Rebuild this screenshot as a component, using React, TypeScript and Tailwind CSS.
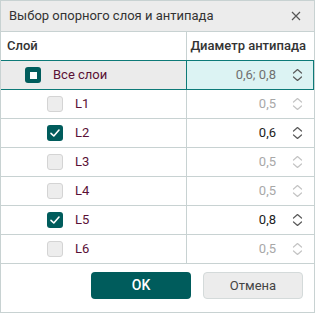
import React from "react";

const font = { fontFamily: "Roboto, 'Noto Sans', sans-serif" };

function Chevrons({ active }: { active: boolean }) {
  return (
    <svg width="11" height="14" viewBox="0 0 11 14" className="shrink-0">
      <path
        d="M1.5 5 L5.5 1.5 L9.5 5 M1.5 9 L5.5 12.5 L9.5 9"
        fill="none"
        stroke={active ? "#5a5a5a" : "#c4c4c4"}
        strokeWidth="1.2"
        strokeLinecap="round"
        strokeLinejoin="round"
      />
    </svg>
  );
}

function Check({ checked }: { checked: boolean }) {
  if (checked)
    return (
      <div className="w-[16px] h-[16px] rounded-[3px] bg-[#005c5c] flex items-center justify-center">
        <svg width="12" height="12" viewBox="0 0 12 12">
          <path d="M2 6.3 L4.8 9 L10 3" fill="none" stroke="white" strokeWidth="1.6" strokeLinecap="round" strokeLinejoin="round" />
        </svg>
      </div>
    );
  return <div className="w-[16px] h-[16px] rounded-[3px] bg-[#ededed] border border-[#d4d4d4]" />;
}

const rows = [
  { name: "L1", checked: false, value: "0,5" },
  { name: "L2", checked: true, value: "0,6" },
  { name: "L3", checked: false, value: "0,5" },
  { name: "L4", checked: false, value: "0,5" },
  { name: "L5", checked: true, value: "0,8" },
  { name: "L6", checked: false, value: "0,5" },
];

export default function App() {
  return (
    <div style={font} className="w-[315px] h-[313px] border border-[#c8d2d2] bg-white flex flex-col text-[13px] whitespace-nowrap">
      <div className="h-[31px] bg-[#ececec] flex items-center justify-between pl-[8px] pr-[13px] border-b border-[#c8d2d2] shrink-0">
        <span className="text-[#333] text-[13px]">Выбор опорного слоя и антипада</span>
        <svg width="10" height="10" viewBox="0 0 10 10">
          <path d="M1 1 L9 9 M9 1 L1 9" stroke="#555" strokeWidth="1.2" />
        </svg>
      </div>
      <div className="h-[28px] flex shrink-0">
        <div className="w-[185px] flex items-center pl-[6px] font-medium text-[#333]">Слой</div>
        <div className="flex-1 border-l border-[#c8d2d2] flex items-center justify-end pr-[8px] font-medium text-[#333]">
          Диаметр антипада
        </div>
      </div>
      <div className="h-[30px] flex border-y border-[#0d7a78] shrink-0">
        <div className="w-[185px] bg-[#ebebeb] flex items-center pl-[24px] gap-[12px]">
          <div className="w-[16px] h-[16px] rounded-[3px] bg-[#005c5c] flex items-center justify-center">
            <div className="w-[7px] h-[7px] bg-white" />
          </div>
          <span className="text-[#5a1035]">Все слои</span>
        </div>
        <div className="flex-1 bg-[#dcf3f3] border-x border-[#0d7a78] flex items-center justify-end pr-[10px] gap-[16px]">
          <span className="text-[#707070]">0,6; 0,8</span>
          <Chevrons active={true} />
        </div>
      </div>
      {rows.map((r) => (
        <div key={r.name} className="h-[29px] flex border-b border-[#c8d2d2] shrink-0">
          <div className="w-[185px] flex items-center pl-[46px] gap-[12px]">
            <Check checked={r.checked} />
            <span className="text-[#5a1035]">{r.name}</span>
          </div>
          <div className="flex-1 border-l border-[#c8d2d2] flex items-center justify-end pr-[11px] gap-[16px]">
            <span className={r.checked ? "text-[#222]" : "text-[#a8a8a8]"}>{r.value}</span>
            <Chevrons active={r.checked} />
          </div>
        </div>
      ))}
      <div className="flex-1 flex justify-end items-start pt-[8px] pr-[11px] gap-[12px]">
        <button className="w-[100px] h-[27px] rounded-[4px] bg-[#005c5c] text-white font-medium text-[14px]">OK</button>
        <button className="w-[100px] h-[27px] rounded-[4px] bg-[#ececec] border border-[#d4dada] text-[#444]">Отмена</button>
      </div>
    </div>
  );
}
